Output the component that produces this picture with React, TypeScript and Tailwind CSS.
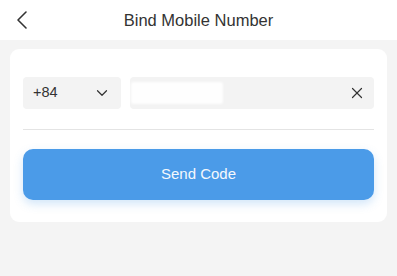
import { ChevronLeft, ChevronDown, X } from "lucide-react";

export default function App() {
  return (
    <div className="w-[397px] h-[276px] bg-[#f4f4f4] font-['Liberation_Sans',Arial,sans-serif] text-[#333]">
      <header className="relative flex items-center justify-center h-10 bg-white">
        <ChevronLeft className="absolute left-[6px] top-[4px] w-8 h-8 text-[#333]" strokeWidth={1.2} />
        <h1 className="text-[16.5px] font-normal text-[#333]">Bind Mobile Number</h1>
      </header>

      <div className="mx-[10px] mt-[9px] bg-white rounded-[9px] px-[13px] pt-[28px] pb-[22px]">
        <div className="flex gap-[9px] h-8">
          <div className="flex items-center justify-between w-[98px] px-[10px] bg-[#f3f3f3] rounded-[4px]">
            <span className="text-[14.5px]">+84</span>
            <ChevronDown className="w-[18px] h-[18px] text-[#333]" strokeWidth={1.6} />
          </div>
          <div className="flex-1 flex items-center justify-between bg-[#f3f3f3] rounded-[4px] pl-px pr-[8px]">
            <div className="w-[92px] h-[22px] bg-white/90 rounded-[3px] blur-[1px]" />
            <X className="w-[18px] h-[18px] text-[#333]" strokeWidth={1.6} />
          </div>
        </div>
        <div className="mt-[20px] h-px bg-[#e4e4e4]" />
        <button className="mt-[19px] w-full h-[51px] rounded-[10px] bg-[#4b9be8] text-[#f4f8fd] text-[15px] shadow-[0_4px_10px_rgba(75,155,232,0.25)]">
          Send Code
        </button>
      </div>
    </div>
  );
}
